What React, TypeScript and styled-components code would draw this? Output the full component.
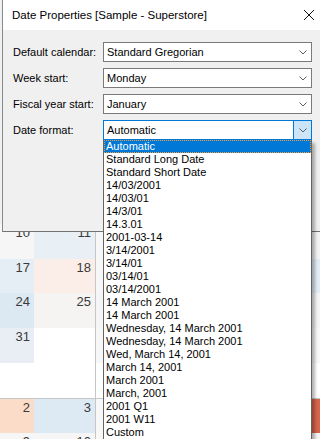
import React from 'react'
import styled, { createGlobalStyle } from 'styled-components'

const GlobalStyle = createGlobalStyle`
  html, body {
    margin: 0;
    padding: 0;
    background: #fff;
  }
  body {
    font-family: "Liberation Sans", Arial, sans-serif;
  }
`

const Page = styled.div`
  position: relative;
  width: 320px;
  height: 439px;
  overflow: hidden;
  background: #fff;
`

// background calendar (mostly covered by the dialog)
const CalendarTop = styled.div`
  height: 224px;
  background: #eef0f2;
`

const CalRow = styled.div<{ $h: number; $line?: boolean }>`
  display: grid;
  grid-template-columns: 34px 61px 1px 61px 61px 61px 61px;
  height: ${({ $h }) => $h}px;
  box-sizing: border-box;
  border-top: ${({ $line }) => ($line ? '1px solid #c6c6c6' : 'none')};
`

const Cell = styled.div<{ $bg: string }>`
  background: ${({ $bg }) => $bg};
  font-size: 13px;
  line-height: 14px;
  color: #3a3a3a;
  text-align: right;
  padding: 2px 4px 0 0;
`

const ColLine = styled.div`
  background: #c6c6c6;
`

const Dialog = styled.div`
  position: absolute;
  top: 0;
  left: 2px;
  width: 330px;
  height: 232px;
  box-sizing: border-box;
  background: #f0f0f0;
  border-left: 1px solid #8a8a8a;
  border-bottom: 1px solid #727272;
`

const TitleBar = styled.div`
  height: 30px;
  background: #fff;
  display: flex;
  align-items: center;
  justify-content: space-between;
`

const Title = styled.div`
  padding-left: 9px;
  font-size: 11.5px;
  color: #000;
`

const CloseButton = styled.div`
  width: 46px;
  height: 30px;
  display: flex;
  align-items: center;
  justify-content: center;
`

const Form = styled.div`
  display: grid;
  grid-template-columns: 90px 209px;
  row-gap: 6px;
  align-items: center;
  padding: 12px 0 0 10px;
`

const Label = styled.div`
  font-size: 11px;
  color: #000;
`

const Combo = styled.div<{ $open?: boolean }>`
  position: relative;
  height: 20px;
  box-sizing: border-box;
  display: flex;
  background: #fff;
  border: 1px solid ${({ $open }) => ($open ? '#0078d7' : '#7a7a7a')};
`

const ComboValue = styled.div`
  flex: 1;
  display: flex;
  align-items: center;
  padding-left: 3px;
  font-size: 11px;
  color: #000;
`

const ComboButton = styled.div<{ $open?: boolean }>`
  width: 17px;
  display: flex;
  align-items: center;
  justify-content: center;
  background: ${({ $open }) => ($open ? '#cce4f7' : 'transparent')};
  border-left: 1px solid ${({ $open }) => ($open ? '#0078d7' : 'transparent')};
`

const DropList = styled.div`
  position: absolute;
  top: calc(100% + 1px);
  left: -1px;
  width: 209px;
  box-sizing: border-box;
  background: #fff;
  border: 1px solid #646464;
  border-top: none;
  box-shadow: 3px 3px 3px rgba(0, 0, 0, 0.3);
`

const Item = styled.div<{ $selected?: boolean }>`
  height: 13px;
  line-height: 13px;
  padding-left: 2px;
  font-size: 11px;
  white-space: nowrap;
  color: ${({ $selected }) => ($selected ? '#fff' : '#000')};
  background: ${({ $selected }) => ($selected ? '#0078d7' : 'transparent')};
  outline: ${({ $selected }) => ($selected ? '1px dotted #f0a040' : 'none')};
  outline-offset: -1px;
`

const Chevron = () => (
  <svg width="8" height="5" viewBox="0 0 8 5">
    <path d="M0.5 0.5 L4 4 L7.5 0.5" fill="none" stroke="#5f5f5f" strokeWidth="1" />
  </svg>
)

const weeks: { h: number; line?: boolean; cells: [string, string][] }[] = [
  { h: 35, cells: [['10', '#f6f6f6'], ['11', '#e8eff5'], ['', '#f7f7f7'], ['', '#f7f7f7'], ['', '#f7f7f7'], ['', '#f3f3f3']] },
  { h: 34, cells: [['17', '#e6eef5'], ['18', '#fbeee8'], ['', '#f7f7f7'], ['', '#f7f7f7'], ['', '#f7f7f7'], ['', '#e3edf5']] },
  { h: 35, cells: [['24', '#dce8f2'], ['25', '#f5f4f2'], ['', '#f5f5f5'], ['', '#f5f5f5'], ['', '#f5f5f5'], ['', '#f4f4f4']] },
  { h: 35, cells: [['31', '#e8eef3'], ['', '#ffffff'], ['', '#f7f7f7'], ['', '#f7f7f7'], ['', '#f7f7f7'], ['', '#f8f8f8']] },
  { h: 35, cells: [['', '#ffffff'], ['', '#ffffff'], ['', '#ffffff'], ['', '#ffffff'], ['', '#ffffff'], ['', '#ffffff']] },
  { h: 35, line: true, cells: [['2', '#fbdcc9'], ['3', '#dde9f3'], ['', '#f8f8f8'], ['', '#f8f8f8'], ['', '#f8f8f8'], ['', '#d9654f']] },
  { h: 35, cells: [['9', '#f6f6f6'], ['10', '#f6f6f6'], ['', '#f8f8f8'], ['', '#f8f8f8'], ['', '#f8f8f8'], ['', '#f6f6f6']] },
]

const formats = [
  'Automatic',
  'Standard Long Date',
  'Standard Short Date',
  '14/03/2001',
  '14/03/01',
  '14/3/01',
  '14.3.01',
  '2001-03-14',
  '3/14/2001',
  '3/14/01',
  '03/14/01',
  '03/14/2001',
  '14 March 2001',
  '14 March 2001',
  'Wednesday, 14 March 2001',
  'Wednesday, 14 March 2001',
  'Wed, March 14, 2001',
  'March 14, 2001',
  'March 2001',
  'March, 2001',
  '2001 Q1',
  '2001 W11',
  'Custom',
]

const fields = [
  { label: 'Default calendar:', value: 'Standard Gregorian' },
  { label: 'Week start:', value: 'Monday' },
  { label: 'Fiscal year start:', value: 'January' },
]

const App = () => {
  return (
    <Page>
      <GlobalStyle />
      <CalendarTop />
      {weeks.map((w, i) => (
        <CalRow key={i} $h={w.h} $line={w.line}>
          <Cell $bg={w.cells[0][1]}>{w.cells[0][0]}</Cell>
          <Cell $bg={w.cells[1][1]}>{w.cells[1][0]}</Cell>
          <ColLine />
          {w.cells.slice(2).map((c, j) => (
            <Cell key={j} $bg={c[1]}>{c[0]}</Cell>
          ))}
        </CalRow>
      ))}

      <Dialog>
        <TitleBar>
          <Title>Date Properties [Sample - Superstore]</Title>
          <CloseButton>
            <svg width="10" height="10" viewBox="0 0 10 10">
              <path d="M0 0 L10 10 M10 0 L0 10" stroke="#111" strokeWidth="1" />
            </svg>
          </CloseButton>
        </TitleBar>
        <Form>
          {fields.map((f) => (
            <React.Fragment key={f.label}>
              <Label>{f.label}</Label>
              <Combo>
                <ComboValue>{f.value}</ComboValue>
                <ComboButton>
                  <Chevron />
                </ComboButton>
              </Combo>
            </React.Fragment>
          ))}
          <Label>Date format:</Label>
          <Combo $open>
            <ComboValue>Automatic</ComboValue>
            <ComboButton $open>
              <Chevron />
            </ComboButton>
            <DropList>
              {formats.map((f, i) => (
                <Item key={i} $selected={i === 0}>{f}</Item>
              ))}
            </DropList>
          </Combo>
        </Form>
      </Dialog>
    </Page>
  )
}

export default App
